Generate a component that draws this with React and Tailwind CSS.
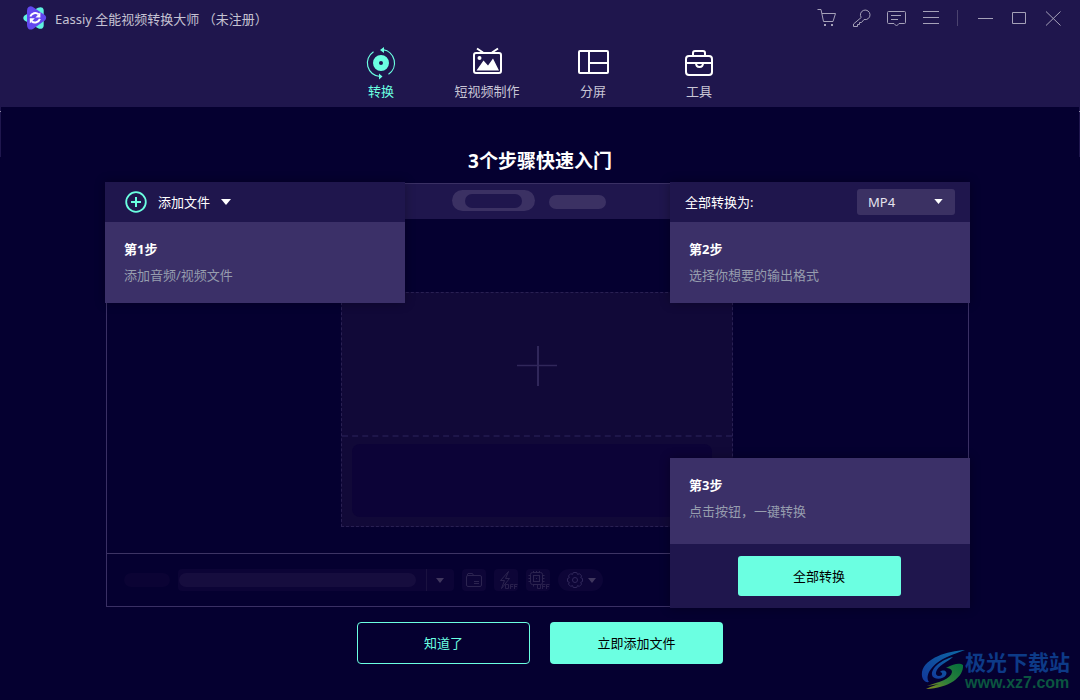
import React from "react";

function Caret({ className }) {
  return (
    <svg viewBox="0 0 10 6" className={className} fill="currentColor" aria-hidden="true">
      <path d="M0 0H10L5 6Z" />
    </svg>
  );
}

function Logo() {
  return (
    <svg viewBox="0 0 24 24" className="h-6 w-6" aria-hidden="true">
      <path
        d="M1.500 9.500L15 1.800Q17.500 0.500 19.500 1.800Q20.900 3 20.700 5V19Q20.900 21 19.500 22.200Q17.500 23.500 15 22.200L1.500 14.500Q-1 12 1.500 9.500Z"
        fill="#5ff3e0"
      />
      <path
        d="M9.500 0.800L21.800 9Q24.500 11.700 21.800 14.500L10 23Q7.500 24.200 5.500 23Q4 21.500 4 19V5Q4 2 5.500 0.900Q7.800 -0.200 9.500 0.800Z"
        fill="#6247ee"
      />
      <g fill="none" stroke="#fff" strokeWidth="2">
        <path d="M7.300 10.500A5.200 5.200 0 0 1 15.600 8.300" />
        <path d="M16.900 12.900A5.200 5.200 0 0 1 8.600 15.200" />
      </g>
      <path d="M17.400 6.200V11.400H12.400Z" fill="#fff" />
      <path d="M6.800 17.400V12.200H11.800Z" fill="#fff" />
    </svg>
  );
}

function TitleButton({ label, children }) {
  return (
    <button type="button" aria-label={label} className="flex h-9 w-[34px] items-center justify-center">
      <svg
        viewBox="0 0 20 20"
        className="h-5 w-5"
        fill="none"
        stroke="currentColor"
        strokeWidth="1"
        aria-hidden="true"
      >
        {children}
      </svg>
    </button>
  );
}

function NavItem({ label, active, children }) {
  return (
    <button
      type="button"
      className={
        active
          ? "flex w-[106px] flex-col items-center text-[#6bffe1]"
          : "flex w-[106px] flex-col items-center text-white"
      }
    >
      <svg viewBox="0 0 34 34" className="h-[34px] w-[34px]" fill="none" stroke="currentColor" strokeWidth="2" aria-hidden="true">
        {children}
      </svg>
      <span className={active ? "" : "text-[#c9c6d6]"}>{label}</span>
    </button>
  );
}

function StepText({ title, text, className }) {
  return (
    <div className={"flex flex-col gap-1.5 bg-[#3b3068] px-[19px] pt-[17px] " + className}>
      <h2 className="font-bold text-white">{title}</h2>
      <p className="text-[#969dae]">{text}</p>
    </div>
  );
}

function Header() {
  return (
    <header className="bg-[#1f164d]">
      <div className="flex h-9 items-center justify-between pl-[23px] pr-[10px]">
        <div className="flex items-center gap-2 text-[#c5c2d2]">
          <Logo />
          <span className="pt-0.5">Eassiy 全能视频转换大师 （未注册）</span>
        </div>
        <div className="flex items-center text-[#a5a1b8]">
          <div className="flex gap-px">
            <TitleButton label="购物车">
              <path d="M1.500 1.500H5L7.500 13.500H17L19.500 5.500H6" />
              <path d="M8 16h2v2h-2zM15 16h2v2h-2z" fill="currentColor" stroke="none" />
            </TitleButton>
            <TitleButton label="注册">
              <path d="M10.200 9.500L2.500 16V18.500H6.500V16.500H8.500V14.500H10.500L13 11.500A4.800 4.800 0 1 0 10.200 9.500Z" />
            </TitleButton>
            <TitleButton label="反馈">
              <path d="M2.500 3.500H18.500Q19.500 3.500 19.500 4.500V14.500Q19.500 15.500 18.500 15.500H13L10.500 18L8 15.500H2.500Q1.500 15.500 1.500 14.500V4.500Q1.500 3.500 2.500 3.500Z" />
              <path d="M5 7.500H15M5 11.500H12" />
            </TitleButton>
            <TitleButton label="菜单">
              <path d="M2 3.500H18M2 9.500H18M2 15.500H18" />
            </TitleButton>
          </div>
          <span className="ml-[9px] mr-[10px] h-4 w-px bg-[#4b436f]" />
          <TitleButton label="最小化">
            <path d="M3 10.500H18" />
          </TitleButton>
          <TitleButton label="最大化">
            <path d="M3.500 4.500H16.500V15.500H3.500Z" />
          </TitleButton>
          <TitleButton label="关闭">
            <path d="M3 3.500L17.500 17.500M17.500 3.500L3 17.500" />
          </TitleButton>
        </div>
      </div>
      <nav className="flex justify-center pb-1.5 pt-[11px]">
        <NavItem label="转换" active>
          <circle cx="17" cy="16" r="5" strokeWidth="6" />
          <path d="M9.500 4.700A13.500 13.500 0 0 0 16 29.500M24.500 27.300A13.500 13.500 0 0 0 19 2.700" strokeWidth="1.200" />
          <path d="M16 3L20 0V6ZM18.500 29.500L15 26.500V32.500Z" fill="currentColor" stroke="none" />
        </NavItem>
        <NavItem label="短视频制作">
          <rect x="4" y="6" width="27" height="20" rx="2" />
          <path d="M7 1.500L13 5.500M28 1.500L22 5.500" />
          <path d="M6.500 23.500L13.500 13.500L18 18.500L23 11.500L29 23.500Z" fill="currentColor" stroke="none" />
          <circle cx="9.500" cy="11" r="2" fill="currentColor" stroke="none" />
        </NavItem>
        <NavItem label="分屏">
          <rect x="3" y="4" width="29" height="22" rx="1" />
          <path d="M13 4V26M13 16H32" />
        </NavItem>
        <NavItem label="工具">
          <rect x="4" y="9" width="26" height="19" rx="3" />
          <path d="M11 9V6Q11 4 13 4H21Q23 4 23 6V9M4 16H30M14 16Q14 20 17.500 20Q21 20 21 16" />
        </NavItem>
      </nav>
    </header>
  );
}

function FadedBox({ children }) {
  return (
    <span className="flex h-[22px] w-6 items-center justify-center rounded-sm bg-[#0d0537] text-[#2c2450]">
      <svg viewBox="0 0 24 22" className="h-[22px] w-6" fill="none" stroke="currentColor" aria-hidden="true">
        {children}
      </svg>
    </span>
  );
}

function OffMark() {
  return (
    <path d="M11.500 15.500h3v4h-3zM16.500 20V15.500H19.500M16.500 17.500H19M20.500 20V15.500H23.500M20.500 17.500H23" strokeWidth="0.900" />
  );
}

function WindowSketch() {
  return (
    <div className="m-px flex flex-col border border-[#3a3064] [grid-area:1/1]" aria-hidden="true">
      <div className="flex h-[35px] items-center justify-center gap-[14px] bg-[#1f164d] pb-0.5 pr-[18px]">
        <span className="flex h-[21px] w-[83px] items-center justify-center rounded-full bg-[#3b3163]">
          <span className="h-3.5 w-[57px] rounded-full bg-[#1f164d]" />
        </span>
        <span className="mt-0.5 h-3.5 w-[57px] rounded-full bg-[#3b3163]" />
      </div>
      <div className="flex grow justify-center pb-[26px] pr-0.5 pt-[73px]">
        <div className="flex h-[235px] w-[392px] flex-col border border-dashed border-[#292053] bg-[#110938]">
          <div className="flex grow items-center justify-center border-b-2 border-dashed border-[#1e164a] pt-1">
            <svg viewBox="0 0 40 40" className="h-10 w-10" stroke="#30275a" aria-hidden="true">
              <path d="M0 19.500H40" strokeWidth="1.500" />
              <path d="M21 0V40" strokeWidth="2" />
            </svg>
          </div>
          <div className="h-[89px] pb-[9px] pl-[10px] pr-5 pt-[7px]">
            <div className="h-full rounded-lg bg-[#0c0337]" />
          </div>
        </div>
      </div>
      <div className="flex h-[53px] items-center gap-2 border-t border-[#3d3464] pl-[17px]">
        <span className="h-3.5 w-[46px] rounded-full bg-[#0b0334]" />
        <span className="flex h-[22px] w-[276px] items-center rounded-sm bg-[#0c0436]">
          <span className="ml-px h-3.5 w-[237px] rounded-full bg-[#160d3e]" />
          <span className="ml-[10px] h-full w-px bg-[#1a1240]" />
          <Caret className="ml-[9px] h-[5px] w-2 text-[#40375e]" />
        </span>
        <FadedBox>
          <rect x="4.500" y="6.500" width="15" height="11" rx="1.500" />
          <path d="M5 6.500L6 4.500H10.500L11.500 6.500M12 12.500H17M12 14.500H17" />
        </FadedBox>
        <FadedBox>
          <path d="M14.500 2.500L6.500 11.500H10.500L7.500 19.500L15.500 9.500H11.500Z" />
          <OffMark />
        </FadedBox>
        <FadedBox>
          <rect x="4.500" y="3.500" width="12" height="12" rx="2" />
          <rect x="7.500" y="6.500" width="6" height="6" />
          <path d="M7.500 2V3.500M10.500 2V3.500M13.500 2V3.500M2.500 6.500H4M2.500 9.500H4M2.500 12.500H4M17 6.500H18.500M17 9.500H18.500M17 12.500H18.500M7.500 16V17.500M10 9.500h1" />
          <OffMark />
        </FadedBox>
        <span className="flex h-[22px] w-[45px] items-center justify-center gap-1 rounded-full bg-[#0d0537] text-[#30275a]">
          <svg viewBox="0 0 18 18" className="h-[18px] w-[18px]" fill="none" stroke="currentColor" aria-hidden="true">
            <path d="M7.300 1.500H10.700L11.500 3.400L13.500 2.700L15.600 4.900L14.700 6.700L16.500 7.500V10.500L14.700 11.300L15.500 13.200L13.300 15.400L11.500 14.600L10.700 16.500H7.300L6.500 14.600L4.700 15.400L2.500 13.200L3.300 11.300L1.500 10.500V7.500L3.300 6.700L2.500 4.900L4.700 2.700L6.500 3.400Z" strokeLinejoin="round" />
            <circle cx="9" cy="9" r="2.500" />
          </svg>
          <Caret className="h-[5px] w-2 text-[#40375e]" />
        </span>
      </div>
    </div>
  );
}

function Steps() {
  return (
    <div className="flex flex-col justify-between [grid-area:1/1]">
      <div className="flex justify-between">
        <section className="w-[300px] shadow-[0_0_10px_rgba(0,0,0,0.3)]">
          <div className="flex h-10 items-center bg-[#1f164d] pl-5">
            <button type="button" className="flex items-center gap-[11px] text-white">
              <svg viewBox="0 0 22 22" className="h-[22px] w-[22px]" fill="none" stroke="#6bffe1" strokeWidth="2" aria-hidden="true">
                <circle cx="11" cy="11" r="9.800" strokeWidth="1.800" />
                <path d="M11 6V16M6 11H16" />
              </svg>
              <span>添加文件</span>
              <Caret className="h-1.5 w-[10px]" />
            </button>
          </div>
          <StepText title="第1步" text="添加音频/视频文件" className="pb-[18px]" />
        </section>
        <section className="w-[300px] shadow-[0_0_10px_rgba(0,0,0,0.3)]">
          <div className="flex h-10 items-center justify-between bg-[#1f164d] px-[15px] text-white">
            <label htmlFor="format">全部转换为:</label>
            <div className="relative">
              <select
                id="format"
                defaultValue="MP4"
                className="block h-[26px] w-[98px] appearance-none rounded-[3px] bg-[#3b3163] pl-[11px] text-[13px] text-[#e6e4ee]"
              >
                <option>MP4</option>
                <option>MOV</option>
                <option>MKV</option>
              </select>
              <Caret className="pointer-events-none absolute right-3 top-[10px] h-[5px] w-[9px]" />
            </div>
          </div>
          <StepText title="第2步" text="选择你想要的输出格式" className="pb-[18px]" />
        </section>
      </div>
      <section className="w-[300px] self-end shadow-[0_0_10px_rgba(0,0,0,0.3)]">
        <StepText title="第3步" text="点击按钮，一键转换" className="pb-[23px]" />
        <div className="flex justify-center bg-[#1f164d] py-3 pr-0.5">
          <button type="button" className="h-10 w-[163px] rounded-[3px] bg-[#6bffe1] text-black">
            全部转换
          </button>
        </div>
      </section>
    </div>
  );
}

function SiteMark() {
  return (
    <div className="absolute bottom-2 right-[10px] flex items-center">
      <svg viewBox="0 0 44 42" className="h-[42px] w-11" aria-hidden="true">
        <defs>
          <linearGradient id="markBlue" x1="1" y1="0" x2="0" y2="1">
            <stop offset="0" stopColor="#0d6aa5" />
            <stop offset="1" stopColor="#12389a" />
          </linearGradient>
          <linearGradient id="markGreen" x1="1" y1="0" x2="0" y2="1">
            <stop offset="0" stopColor="#04703c" />
            <stop offset="0.600" stopColor="#31803a" />
            <stop offset="1" stopColor="#8a8a1a" />
          </linearGradient>
        </defs>
        <path d="M44 1C26 2 4 9 1 23C0 30 4 34 8 33C3 26 12 14 26 8C32 5 39 3 44 1Z" fill="url(#markBlue)" />
        <path d="M32 8C20 11 10 19 11 26C12 31 22 31 25 26C27 22 22 20 19 23C22 23 22 27 18 27C13 27 14 20 22 15C26 12 30 10 32 8Z" fill="url(#markBlue)" />
        <path d="M25 19C34 14 39 14 42 16C43 28 28 39 5 40C9 38 14 36 18 35C14 36 10 36 6 37C18 33 30 30 31 23C31 20 28 19 25 19Z" fill="url(#markGreen)" />
      </svg>
      <div className="flex flex-col">
        <span className="font-['Noto_Sans_CJK_SC',sans-serif] text-[21px] font-bold leading-[26px] text-[#0d3a87]">极光下载站</span>
        <span className="font-['Liberation_Sans',sans-serif] text-base font-bold leading-[18px] text-[#0b5540]">www.xz7.com</span>
      </div>
    </div>
  );
}

function EdgeTrim() {
  return (
    <div className="flex h-[50px] flex-col justify-start bg-[#1f164d] pt-1">
      <span className="h-px w-px bg-[#8f8aa8]" />
    </div>
  );
}

export default function App() {
  return (
    <div className="relative flex min-h-screen flex-col bg-[#050030] font-['Noto_Sans','Noto_Sans_CJK_SC',sans-serif] text-[13px] leading-5">
      <Header />
      <main className="relative flex grow flex-col">
        <div className="absolute left-0 top-0" aria-hidden="true">
          <EdgeTrim />
        </div>
        <div className="absolute right-0 top-0" aria-hidden="true">
          <EdgeTrim />
        </div>
        <h1 className="pb-2 pt-[42px] text-center text-[19px] font-bold leading-[25px] text-white">3个步骤快速入门</h1>
        <div className="grid pl-[105px] pr-[110px]">
          <WindowSketch />
          <Steps />
        </div>
        <div className="flex justify-center gap-5 pb-9 pt-3.5">
          <button type="button" className="h-[42px] w-[173px] rounded-sm border border-[#6bffe1] text-[#6bffe1]">
            知道了
          </button>
          <button type="button" className="h-[42px] w-[173px] rounded-sm bg-[#6bffe1] text-black">
            立即添加文件
          </button>
        </div>
      </main>
      <SiteMark />
    </div>
  );
}
